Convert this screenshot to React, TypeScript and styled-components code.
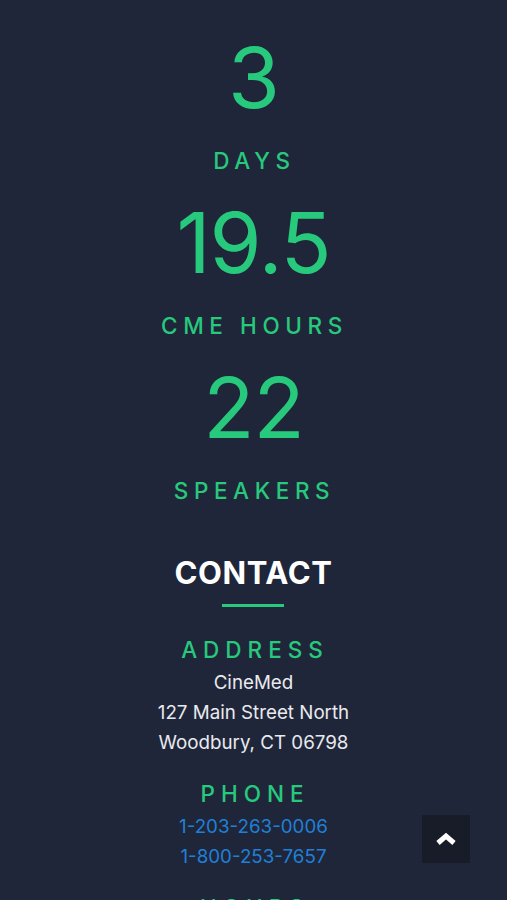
import styled, { createGlobalStyle } from 'styled-components';

const GlobalStyle = createGlobalStyle`
  html, body {
    margin: 0;
    padding: 0;
    background-color: #20263a;
  }
  body {
    font-family: Inter, "Noto Sans", "Liberation Sans", sans-serif;
    -webkit-font-smoothing: antialiased;
  }
`;

const STATS = [
  { value: '3', label: 'DAYS' },
  { value: '19.5', label: 'CME HOURS' },
  { value: '22', label: 'SPEAKERS' },
];

const ADDRESS = ['CineMed', '127 Main Street North', 'Woodbury, CT 06798'];
const PHONES = ['1-203-263-0006', '1-800-253-7657'];

export default function App() {
  return (
    <>
      <GlobalStyle />
      <Style.Page>
        <Style.Stats>
          {STATS.map((stat) => (
            <Style.Stat key={stat.label}>
              <Style.Value>{stat.value}</Style.Value>
              <Style.Label>{stat.label}</Style.Label>
            </Style.Stat>
          ))}
        </Style.Stats>

        <Style.Contact>
          <Style.Title>CONTACT</Style.Title>
          <Style.Rule />

          <Style.Group>
            <Style.GroupLabel>ADDRESS</Style.GroupLabel>
            {ADDRESS.map((line) => (
              <Style.Line key={line}>{line}</Style.Line>
            ))}
          </Style.Group>

          <Style.Group>
            <Style.GroupLabel>PHONE</Style.GroupLabel>
            {PHONES.map((phone) => (
              <Style.Link key={phone} href={`tel:${phone}`}>
                {phone}
              </Style.Link>
            ))}
          </Style.Group>

          <Style.Group>
            <Style.GroupLabel>HOURS</Style.GroupLabel>
            <Style.Line>Monday – Friday</Style.Line>
            <Style.Line>8:30am – 5:00pm EST</Style.Line>
          </Style.Group>
        </Style.Contact>
      </Style.Page>

      <Style.TopButton aria-label="Back to top">
        <svg width="22" height="14" viewBox="0 0 22 14">
          <polyline
            points="3,11 11,4 19,11"
            fill="none"
            stroke="#ffffff"
            strokeWidth="5"
            strokeLinejoin="miter"
          />
        </svg>
      </Style.TopButton>
    </>
  );
}

const green = '#27c97c';

const Style = {
  Page: styled.main`
    display: flex;
    flex-direction: column;
    align-items: center;
    padding: 28px 0 60px;
    text-align: center;
  `,
  Stats: styled.section`
    display: flex;
    flex-direction: column;
    align-items: center;
  `,
  Stat: styled.div`
    display: flex;
    flex-direction: column;
    align-items: center;
  `,
  Value: styled.div`
    color: ${green};
    font-size: 84px;
    font-weight: 400;
    line-height: 100px;
    letter-spacing: -1px;
  `,
  Label: styled.div`
    color: ${green};
    font-size: 22.5px;
    font-weight: 500;
    line-height: 65px;
    letter-spacing: 5.6px;
    padding-left: 2px;
  `,
  Contact: styled.section`
    display: flex;
    flex-direction: column;
    align-items: center;
    margin-top: 30px;
  `,
  Title: styled.h2`
    margin: 0;
    color: #ffffff;
    font-size: 31px;
    font-weight: 700;
    line-height: 40px;
    letter-spacing: 0.6px;
  `,
  Rule: styled.div`
    width: 62px;
    height: 3px;
    margin: 11px 0 7px;
    background-color: ${green};
  `,
  Group: styled.div`
    display: flex;
    flex-direction: column;
    align-items: center;
    margin-top: 21px;
  `,
  GroupLabel: styled.h3`
    margin: 0 0 3px;
    color: ${green};
    font-size: 22.5px;
    font-weight: 500;
    line-height: 30px;
    letter-spacing: 6px;
    padding-left: 3px;
  `,
  Line: styled.div`
    color: #e9eaee;
    font-size: 18.75px;
    line-height: 30px;
  `,
  Link: styled.a`
    color: #1f80d8;
    font-size: 18.75px;
    line-height: 30px;
    text-decoration: none;
  `,
  TopButton: styled.button`
    position: fixed;
    right: 37px;
    bottom: 37px;
    width: 48px;
    height: 48px;
    display: flex;
    align-items: center;
    justify-content: center;
    padding: 0;
    border: none;
    background-color: #181c29;
    cursor: pointer;
  `,
};
